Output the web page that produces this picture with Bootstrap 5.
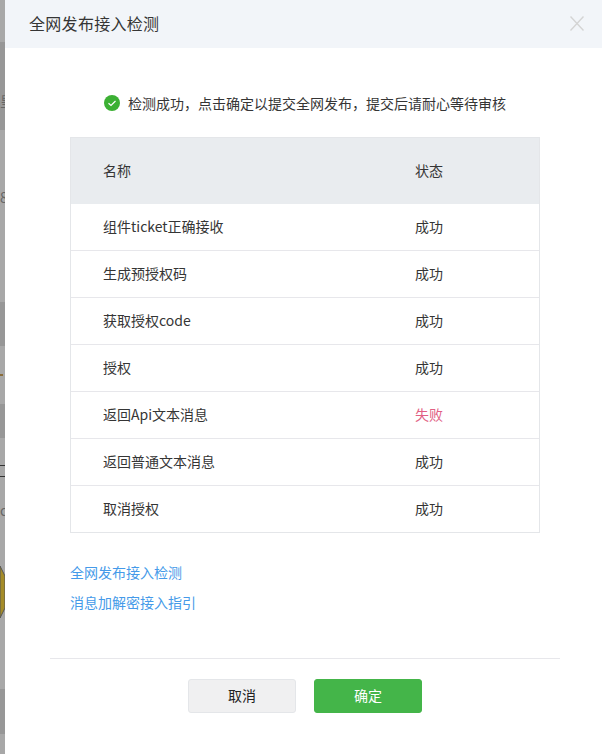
<!DOCTYPE html>
<html lang="zh">
<head>
<meta charset="utf-8">
<link href="https://cdn.jsdelivr.net/npm/bootstrap@5.3.0/dist/css/bootstrap.min.css" rel="stylesheet">
<style>
html,body{height:754px;overflow:hidden;}
body{background:#a6a6a6;font-family:"Noto Sans CJK SC","Liberation Sans",sans-serif;color:#353535;font-size:14px;}
.shell{height:754px;}
.side-strip{width:5px;flex:none;overflow:hidden;background:#a8a8a8;color:#666;font-size:14px;white-space:nowrap;}
.seg{overflow:hidden;line-height:20px;}
.seg-dark{background:#979797;}
.seg-line{height:1px;background:#333;}
.s42{height:42px;}.s88{height:88px;padding-top:48px;}.s172{height:172px;padding-top:57px;}
.s44{height:44px;}.s58{height:58px;}.s34{height:34px;}.s27{height:27px;}.s10{height:10px;}
.s88b{height:89px;padding-top:23px;}.s71{height:71px;}.s45{height:45px;}.s21{height:21px;}
.s29{height:29px;}
.tick{display:block;width:3px;height:2px;background:#8a6d3b;margin-top:28px;}
.hexa{display:block;}
.dlg{width:597px;flex:none;background:#fff;}
.dlg-head{height:48px;background:#f2f5f9;padding:0 18px 0 24px;}
.dlg-title{font-size:16px;letter-spacing:.3px;color:#353535;margin:0;font-weight:400;}
.dlg-close{width:14px;height:15px;border:0;background:none;padding:0;display:block;margin-top:-2px;}
.dlg-close svg{display:block;}
.notice{margin-top:41px;height:28px;padding-left:99px;}
.notice span{margin-left:8px;}
.check-list{margin:20px 57px 0 65px;width:470px;border:1px solid #e4e6e9;}
.check-row{height:47px;border-bottom:1px solid #e7e7eb;padding-bottom:2px;}
.check-row:last-child{border-bottom:0;height:46px;}
.check-head{height:66px;background:#e9ecef;border-bottom:0;}
.cell-name{width:344px;padding-left:32px;}
.fail{color:#e15f84;}
.guide{margin:24px 0 0 65px;}
.guide a{display:block;color:#459ae9;text-decoration:none;line-height:30px;}
.dlg-foot{margin:41px 42px 0 45px;border-top:1px solid #e7e7eb;padding-top:20px;gap:18px;}
.btn-plain,.btn-ok{width:108px;height:34px;font-size:14px;padding:0 0 2px;border-radius:3px;}
.btn-plain{background:#f0f0f1;border:1px solid #e4e6e9;color:#222;}
.btn-ok{background:#44b549;border:1px solid #44b549;color:#fff;}
</style>
</head>
<body>
<div class="shell d-flex">
  <div class="side-strip">
    <div class="seg s42"></div>
    <div class="seg seg-dark s88">皇</div>
    <div class="seg s172">8</div>
    <div class="seg seg-dark s44"></div>
    <div class="seg s58"><span class="tick"></span></div>
    <div class="seg seg-dark s34"></div>
    <div class="seg s27"></div>
    <div class="seg-line"></div>
    <div class="seg s10"></div>
    <div class="seg-line"></div>
    <div class="seg s88b">c</div>
    <svg class="hexa" width="5" height="52" viewBox="0 0 5 52"><polygon points="0,0 5,10 5,42 0,52" fill="#a58c28" stroke="#555" stroke-width="1"/></svg>
    <div class="seg s71"></div>
    <div class="seg seg-dark s45"></div>
    <div class="seg s21"></div>
  </div>
  <div class="dlg">
    <div class="dlg-head d-flex align-items-center justify-content-between">
      <h1 class="dlg-title">全网发布接入检测</h1>
      <button class="dlg-close" aria-label="关闭"><svg width="14" height="15" viewBox="0 0 14 15"><path d="M.5 .5L13.5 14.5M13.5 .5L.5 14.5" stroke="#d4d4d4" stroke-width="1.4" fill="none"/></svg></button>
    </div>
    <div class="notice d-flex align-items-center">
      <svg width="16" height="16" viewBox="0 0 16 16"><circle cx="8" cy="8" r="8" fill="#3cb034"/><path d="M4.5 8.2L7 10.5L11.5 6" stroke="#fff" stroke-width="1.2" fill="none"/></svg>
      <span>检测成功，点击确定以提交全网发布，提交后请耐心等待审核</span>
    </div>
    <div class="check-list">
      <div class="check-row check-head d-flex align-items-center"><div class="cell-name">名称</div><div>状态</div></div>
      <div class="check-row d-flex align-items-center"><div class="cell-name">组件ticket正确接收</div><div>成功</div></div>
      <div class="check-row d-flex align-items-center"><div class="cell-name">生成预授权码</div><div>成功</div></div>
      <div class="check-row d-flex align-items-center"><div class="cell-name">获取授权code</div><div>成功</div></div>
      <div class="check-row d-flex align-items-center"><div class="cell-name">授权</div><div>成功</div></div>
      <div class="check-row d-flex align-items-center"><div class="cell-name">返回Api文本消息</div><div class="fail">失败</div></div>
      <div class="check-row d-flex align-items-center"><div class="cell-name">返回普通文本消息</div><div>成功</div></div>
      <div class="check-row d-flex align-items-center"><div class="cell-name">取消授权</div><div>成功</div></div>
    </div>
    <div class="guide">
      <a href="#">全网发布接入检测</a>
      <a href="#">消息加解密接入指引</a>
    </div>
    <div class="dlg-foot d-flex justify-content-center">
      <button class="btn btn-plain">取消</button>
      <button class="btn btn-ok">确定</button>
    </div>
  </div>
</div>
<script src="https://cdn.jsdelivr.net/npm/bootstrap@5.3.0/dist/js/bootstrap.bundle.min.js"></script>
</body>
</html>
